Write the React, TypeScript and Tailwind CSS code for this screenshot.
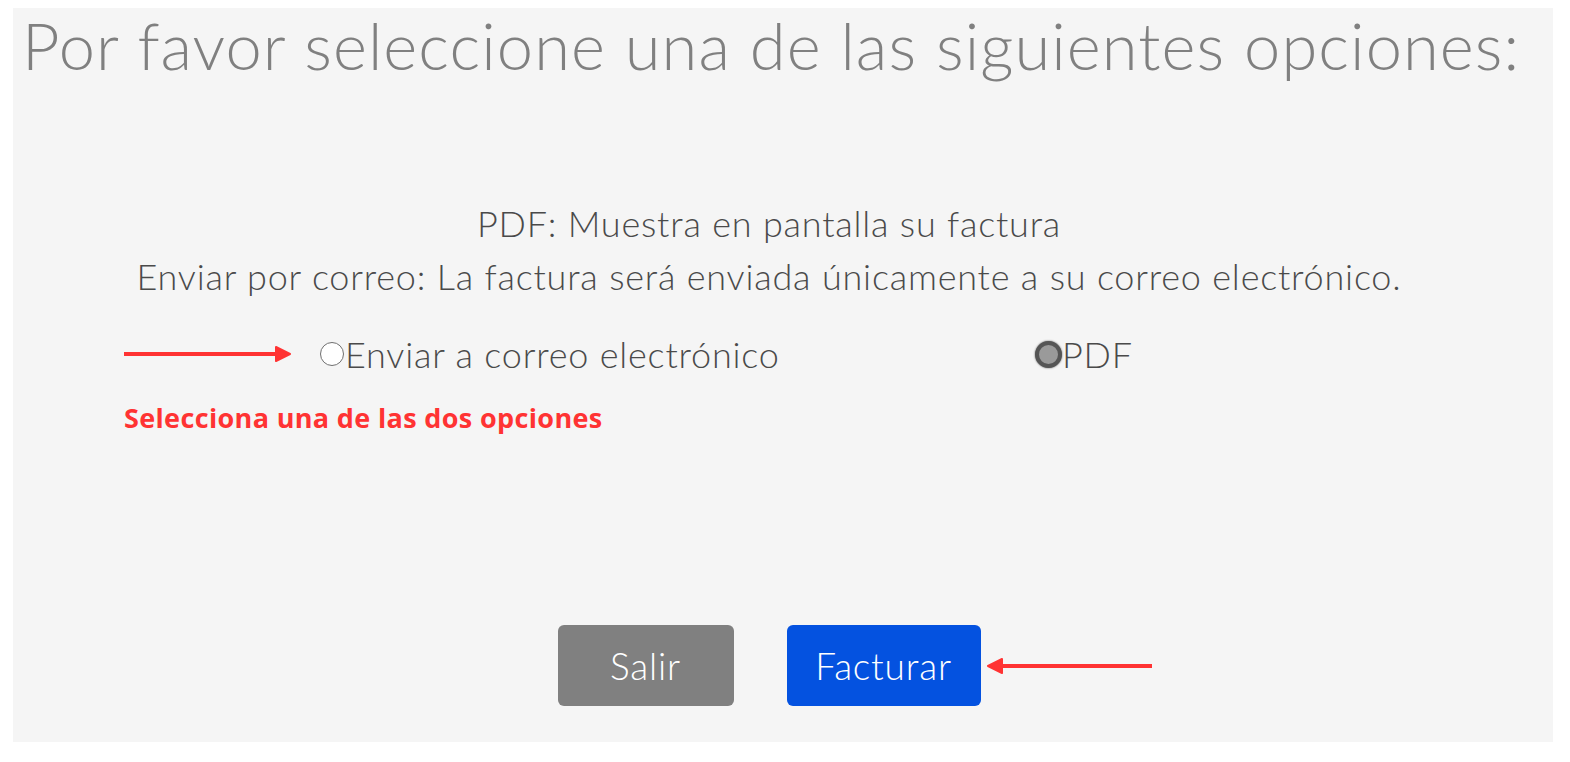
import { useState } from 'react';

function ArrowRight() {
  return (
    <svg width="168" height="20" viewBox="0 0 168 20" className="shrink-0">
      <line x1="0" y1="10" x2="154" y2="10" stroke="#ff3333" strokeWidth="4" />
      <path d="M152 3 L166 10 L152 17 Z" fill="#ff3333" stroke="#ff3333" strokeWidth="2" strokeLinejoin="round" />
    </svg>
  );
}

function ArrowLeft() {
  return (
    <svg width="168" height="20" viewBox="0 0 168 20">
      <line x1="14" y1="10" x2="166" y2="10" stroke="#ff3333" strokeWidth="4" />
      <path d="M16 3 L2 10 L16 17 Z" fill="#ff3333" stroke="#ff3333" strokeWidth="2" strokeLinejoin="round" />
    </svg>
  );
}

function Radio({ checked }: { checked: boolean }) {
  if (checked) {
    return (
      <span className="inline-block w-[27px] h-[27px] rounded-full border-[4px] border-[#555555] bg-[#9a9a9a] shadow-[0_0_2px_#555555] shrink-0" />
    );
  }
  return <span className="inline-block w-[24px] h-[24px] rounded-full border-[1.5px] border-[#6f6f6f] bg-white shrink-0 ml-[2px] mr-[1px]" />;
}

export default function App() {
  const [option, setOption] = useState<'correo' | 'pdf'>('pdf');

  return (
    <div className="min-h-screen bg-white pt-[8px] pl-[13px] font-['Lato',_'Open_Sans',_sans-serif]">
      <div className="w-[1540px] h-[734px] bg-[#f5f5f5] flex flex-col">
        <h1 className="pl-[9px] pt-[5px] text-[65px] leading-none font-light text-[#808080] tracking-[1.1px]">
          Por favor seleccione una de las siguientes opciones:
        </h1>

        <div className="mt-[119px] mr-[28px] text-center text-[36px] leading-[53px] font-light text-[#4a4a4a] tracking-[0.8px]">
          <p>PDF: Muestra en pantalla su factura</p>
          <p>Enviar por correo: La factura será enviada únicamente a su correo electrónico.</p>
        </div>

        <div className="mt-[24px] pl-[111px] flex items-center text-[36px] font-light text-[#4a4a4a] tracking-[0.8px]">
          <ArrowRight />
          <label
            className="ml-[26px] w-[717px] flex items-center cursor-pointer"
            onClick={() => setOption('correo')}
          >
            <Radio checked={option === 'correo'} />
            <span>Enviar a correo electrónico</span>
          </label>
          <label className="flex items-center cursor-pointer" onClick={() => setOption('pdf')}>
            <Radio checked={option === 'pdf'} />
            <span>PDF</span>
          </label>
        </div>

        <p className="mt-[17px] pl-[111px] text-[27px] font-bold text-[#ff3333] tracking-[0.35px] font-['Open_Sans',_sans-serif]">
          Selecciona una de las dos opciones
        </p>

        <div className="mt-auto mb-[36px] mr-[28px] flex justify-center gap-[53px]">
          <button className="w-[176px] h-[81px] rounded-md bg-[#808080] text-white text-[37px] font-light tracking-[0.8px]">
            Salir
          </button>
          <div className="relative">
            <button className="w-[194px] h-[81px] rounded-md bg-[#0452e0] text-white text-[37px] font-light tracking-[0.8px]">
              Facturar
            </button>
            <div className="absolute left-full top-1/2 -translate-y-1/2 ml-[5px]">
              <ArrowLeft />
            </div>
          </div>
        </div>
      </div>
    </div>
  );
}
